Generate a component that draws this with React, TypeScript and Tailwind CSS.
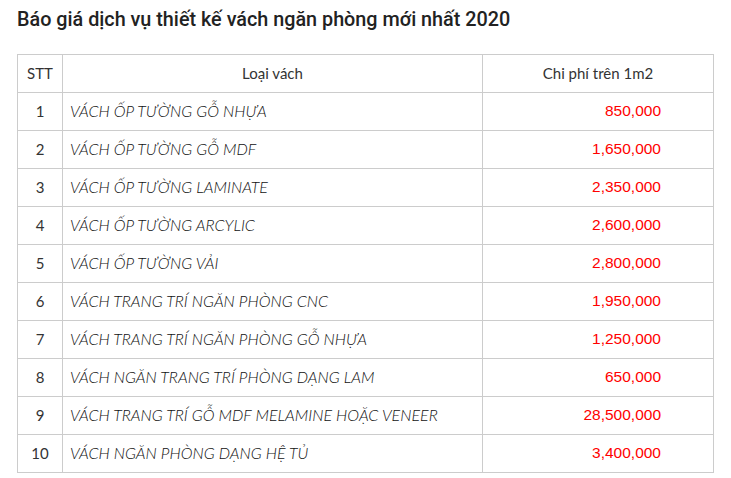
import React from "react";

const rows: [string, string][] = [
  ["VÁCH ỐP TƯỜNG GỖ NHỰA", "850,000"],
  ["VÁCH ỐP TƯỜNG GỖ MDF", "1,650,000"],
  ["VÁCH ỐP TƯỜNG LAMINATE", "2,350,000"],
  ["VÁCH ỐP TƯỜNG ARCYLIC", "2,600,000"],
  ["VÁCH ỐP TƯỜNG VẢI", "2,800,000"],
  ["VÁCH TRANG TRÍ NGĂN PHÒNG CNC", "1,950,000"],
  ["VÁCH TRANG TRÍ NGĂN PHÒNG GỖ NHỰA", "1,250,000"],
  ["VÁCH NGĂN TRANG TRÍ PHÒNG DẠNG LAM", "650,000"],
  ["VÁCH TRANG TRÍ GỖ MDF MELAMINE HOẶC VENEER", "28,500,000"],
  ["VÁCH NGĂN PHÒNG DẠNG HỆ TỦ", "3,400,000"],
];

export default function App() {
  return (
    <div className="w-[731px] h-[478px] bg-white px-[17px] pt-[7px]">
      <h2 className="text-[19.8px] leading-[26px] font-medium text-[#222] font-['Roboto',sans-serif]">
        Báo giá dịch vụ thiết kế vách ngăn phòng mới nhất 2020
      </h2>
      <table className="mt-[21px] w-[696px] border-collapse border border-[#808080] table-fixed">
        <colgroup>
          <col className="w-[45px]" />
          <col className="w-[420px]" />
          <col className="w-[231px]" />
        </colgroup>
        <thead>
          <tr className="h-[38px] font-['Lato',sans-serif] text-[15px] text-[#333]">
            <th className="border border-[#ccc] font-normal text-center">STT</th>
            <th className="border border-[#ccc] font-normal text-center">Loại vách</th>
            <th className="border border-[#ccc] font-normal text-center">Chi phí trên 1m2</th>
          </tr>
        </thead>
        <tbody>
          {rows.map(([name, price], i) => (
            <tr key={i} className="h-[38px]">
              <td className="border border-[#ccc] text-center text-[15px] text-[#333] font-['Lato',sans-serif]">
                {i + 1}
              </td>
              <td className="border border-[#ccc] pl-[7px] pb-[1px] text-[16px] italic font-light text-[#111] font-['Lato',sans-serif]">
                {name}
              </td>
              <td className="border border-[#ccc] pr-[52px] pb-[1px] text-right text-[15.5px] text-[#ff0000] font-['Liberation_Sans',sans-serif]">
                {price}
              </td>
            </tr>
          ))}
        </tbody>
      </table>
    </div>
  );
}
